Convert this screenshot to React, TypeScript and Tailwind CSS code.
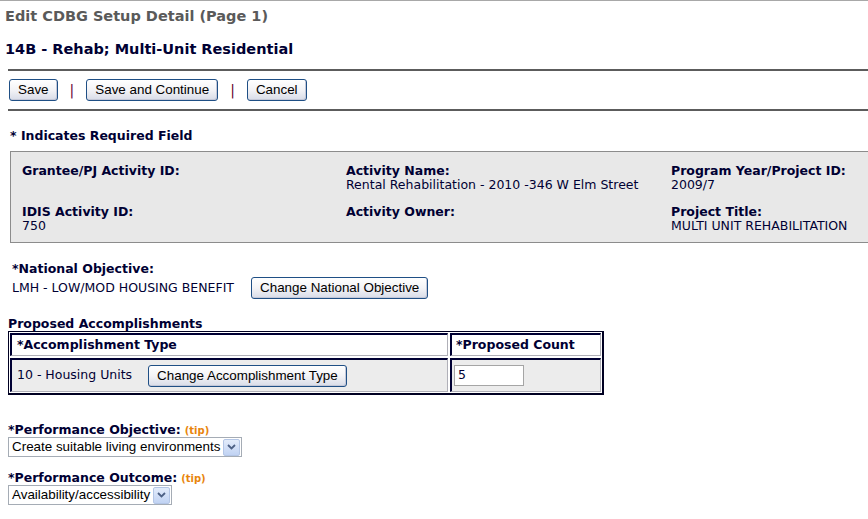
const navy = "text-[#000033]";

const XpButton = ({ children, className = "" }: { children: React.ReactNode; className?: string }) => (
  <button
    className={
      "h-[22px] rounded-[3px] border border-[#1f4f85] bg-gradient-to-b from-white via-[#f3f3f6] to-[#d8dce8] px-[8px] font-['Liberation_Sans',Arial,sans-serif] text-[13.4px] leading-none text-black shadow-[inset_-1px_-1px_0_#c4c8d8] " +
      className
    }
  >
    {children}
  </button>
);

const Bar = () => <span className="mx-[12px] text-[14px] leading-none text-[#660033]">|</span>;

const Field = ({ label, value }: { label: string; value?: string }) => (
  <div className="flex flex-col">
    <span className={`font-bold text-[12.5px] leading-[14px] ${navy}`}>{label}</span>
    <span className={`text-[12.5px] leading-[14px] ${navy}`}>{value ?? "\u00a0"}</span>
  </div>
);

const Chevron = () => (
  <span className="flex h-[17px] w-[17px] items-center justify-center rounded-[2px] border border-[#b4c6e6] bg-gradient-to-b from-[#e3ecfb] to-[#c1d3f3]">
    <svg width="9" height="6" viewBox="0 0 9 6">
      <path d="M1 1 L4.5 4.5 L8 1" fill="none" stroke="#4d6185" strokeWidth="1.8" />
    </svg>
  </span>
);

const Select = ({ value }: { value: string }) => (
  <div className="flex h-[20px] w-fit items-center border border-[#a5acb5] bg-white pl-[3px] pr-[1px]">
    <span className="pr-[3px] font-['Liberation_Sans',Arial,sans-serif] text-[13.4px] leading-none text-black">{value}</span>
    <Chevron />
  </div>
);

const Tip = () => <span className="ml-[4px] text-[10px] font-bold text-[#e8850c]">(tip)</span>;

export default function App() {
  return (
    <div className="h-[519px] w-[868px] overflow-hidden border-t border-[#a8a8a8] bg-white font-['DejaVu_Sans',Verdana,sans-serif]">
      <h1 className="ml-[5px] mt-[6px] text-[14.5px] font-bold leading-[18px] text-[#5a5a5a]">Edit CDBG Setup Detail (Page 1)</h1>
      <h2 className={`ml-[5px] mt-[15px] text-[14.5px] font-bold leading-[18px] ${navy}`}>14B - Rehab; Multi-Unit Residential</h2>

      <div className="ml-[8px] mt-[11px] h-[2px] bg-[#5c5c5c]" />
      <div className="ml-[9px] flex h-[38px] items-center">
        <XpButton>Save</XpButton>
        <Bar />
        <XpButton>Save and Continue</XpButton>
        <Bar />
        <XpButton>Cancel</XpButton>
      </div>
      <div className="ml-[8px] h-[2px] bg-[#5c5c5c]" />

      <p className={`ml-[10px] mt-[18px] text-[12.5px] font-bold leading-[14px] ${navy}`}>* Indicates Required Field</p>

      <div className="ml-[10px] mt-[8px] w-[880px] border border-[#8c8c8c] bg-[#e8e8e8] pb-[9px] pl-[11px] pt-[12px]">
        <div className="grid grid-cols-[324px_325px_1fr] gap-y-[13px]">
          <Field label="Grantee/PJ Activity ID:" />
          <Field label="Activity Name:" value="Rental Rehabilitation - 2010 -346 W Elm Street" />
          <Field label="Program Year/Project ID:" value="2009/7" />
          <Field label="IDIS Activity ID:" value="750" />
          <Field label="Activity Owner:" />
          <Field label="Project Title:" value="MULTI UNIT REHABILITATION" />
        </div>
      </div>

      <div className="ml-[12px] mt-[19px]">
        <p className={`text-[12.5px] font-bold leading-[14px] ${navy}`}>*National Objective:</p>
        <div className="mt-[1px] flex items-center gap-[17px]">
          <span className={`text-[12.5px] ${navy}`}>LMH - LOW/MOD HOUSING BENEFIT</span>
          <XpButton>Change National Objective</XpButton>
        </div>
      </div>

      <p className={`ml-[8px] mt-[18px] text-[12.5px] font-bold leading-[14px] ${navy}`}>Proposed Accomplishments</p>
      <div className="ml-[8px] w-[596px] border border-b-2 border-r-2 border-[#000022] p-[1px]">
        <div className="grid grid-cols-[438px_1fr] gap-[2px]">
          <div className={`flex h-[23px] items-center border-l-2 border-t-2 border-b border-r border-b-[#b0b0b8] border-l-[#000033] border-r-[#b0b0b8] border-t-[#000033] bg-white pl-[5px] text-[12.5px] font-bold ${navy}`}>
            *Accomplishment Type
          </div>
          <div className={`flex h-[23px] items-center border-l-2 border-t-2 border-b border-r border-b-[#b0b0b8] border-l-[#000033] border-r-[#b0b0b8] border-t-[#000033] bg-white pl-[4px] text-[12.5px] font-bold ${navy}`}>
            *Proposed Count
          </div>
          <div className="flex h-[34px] items-center gap-[16px] border-b border-l-2 border-r border-t-2 border-b-[#b0b0b8] border-l-[#000033] border-r-[#b0b0b8] border-t-[#000033] bg-[#ececec] pl-[5px]">
            <span className={`text-[12.5px] ${navy}`}>10 - Housing Units</span>
            <XpButton>Change Accomplishment Type</XpButton>
          </div>
          <div className="flex h-[34px] items-center border-b border-l-2 border-r border-t-2 border-b-[#b0b0b8] border-l-[#000033] border-r-[#b0b0b8] border-t-[#000033] bg-[#ececec] pl-[2px]">
            <div className={`flex h-[21px] w-[70px] items-center border border-[#a5a5a5] bg-white pl-[3px] text-[12.5px] ${navy}`}>5</div>
          </div>
        </div>
      </div>

      <div className="ml-[8px] mt-[29px]">
        <p className={`text-[12.5px] font-bold leading-[12px] ${navy}`}>
          *Performance Objective:
          <Tip />
        </p>
        <Select value="Create suitable living environments" />
      </div>

      <div className="ml-[8px] mt-[15px]">
        <p className={`text-[12.5px] font-bold leading-[12px] ${navy}`}>
          *Performance Outcome:
          <Tip />
        </p>
        <Select value="Availability/accessibility" />
      </div>
    </div>
  );
}
